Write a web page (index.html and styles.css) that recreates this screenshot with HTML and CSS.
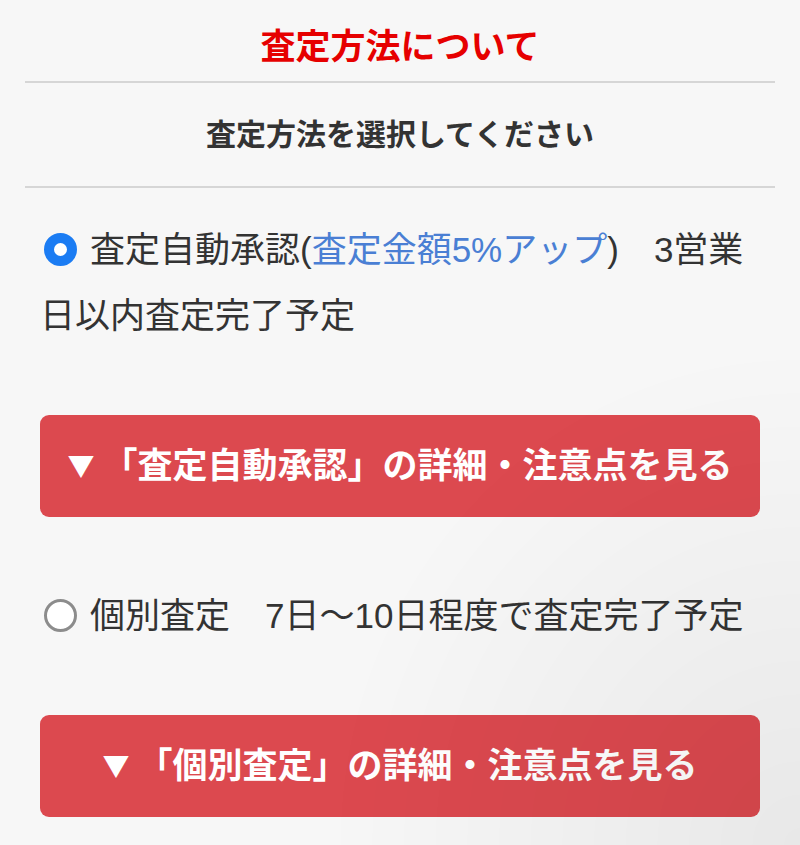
FILE: index.html
```html
<!DOCTYPE html>
<html lang="ja">
<head>
<meta charset="utf-8">
<title>査定方法について</title>
<link rel="stylesheet" href="styles.css">
</head>
<body>
<div class="wrap">
  <h2 class="title">査定方法について</h2>
  <h3 class="subtitle">査定方法を選択してください</h3>
  <div class="options">
    <p class="option"><span class="radio radio-on"></span>査定自動承認(<span class="link">査定金額5%アップ</span>)　3営業日以内査定完了予定</p>
    <a class="btn"><span class="arrow">▼</span>「査定自動承認」の詳細・注意点を見る</a>
    <p class="option"><span class="radio radio-off"></span>個別査定　7日〜10日程度で査定完了予定</p>
    <a class="btn"><span class="arrow">▼</span>「個別査定」の詳細・注意点を見る</a>
  </div>
</div>
</body>
</html>
```
FILE: styles.css
```css
html, body {
  margin: 0;
  padding: 0;
}
body {
  background: #f7f7f7;
  font-family: "Liberation Sans", "Noto Sans CJK JP", sans-serif;
  color: #333;
  min-height: 845px;
}
body::after {
  content: "";
  position: fixed;
  inset: 0;
  pointer-events: none;
  background: radial-gradient(ellipse at 100% 100%, rgba(0,0,0,0.06), rgba(0,0,0,0) 42%);
}
.wrap {
  padding: 0 25px;
}
.title {
  margin: 0;
  padding: 21px 0 8px;
  text-align: center;
  font-size: 35px;
  line-height: 52px;
  font-weight: bold;
  color: #e60000;
  border-bottom: 2px solid #d6d6d6;
}
.subtitle {
  margin: 0;
  padding: 29px 0;
  text-align: center;
  font-size: 30px;
  line-height: 45px;
  font-weight: bold;
  color: #333;
  border-bottom: 2px solid #d6d6d6;
}
.options {
  display: flex;
  flex-direction: column;
  gap: 66px;
  padding: 29px 15px 0;
}
.option {
  margin: 0;
  font-size: 35px;
  line-height: 66px;
  color: #333;
}
.link {
  color: #4a7fd4;
}
.radio {
  display: inline-block;
  box-sizing: border-box;
  width: 33px;
  height: 33px;
  border-radius: 50%;
  background: #fff;
  margin: 0 13px 0 4px;
  vertical-align: middle;
  position: relative;
  top: -3px;
}
.radio-on {
  border: 10px solid #1b7cf3;
}
.radio-off {
  border: 3px solid #8c8c8c;
}
.btn {
  display: block;
  height: 102px;
  box-sizing: border-box;
  background: #dc494f;
  border-radius: 9px;
  color: #fff;
  font-weight: bold;
  font-size: 35px;
  line-height: 52px;
  padding: 25px 0;
  text-align: center;
  text-decoration: none;
}
.arrow {
  display: inline-block;
  font-family: "Noto Sans CJK JP", sans-serif;
  font-size: 27px;
  line-height: 27px;
  margin-right: 8px;
  vertical-align: 2px;
}
```
